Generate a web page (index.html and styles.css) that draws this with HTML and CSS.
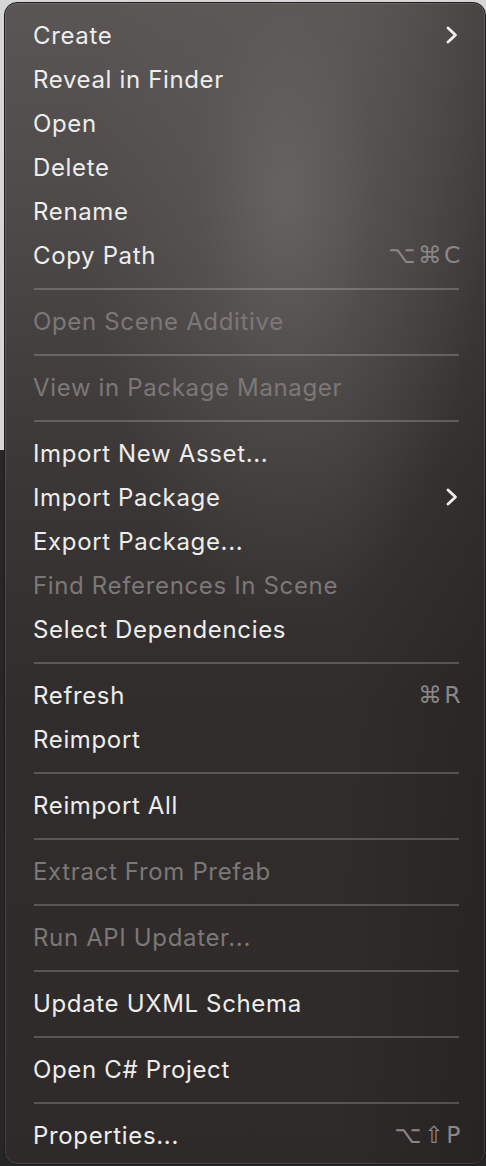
FILE: index.html
```html
<!DOCTYPE html>
<html>
<head>
<meta charset="utf-8">
<link rel="stylesheet" href="styles.css">
</head>
<body>
<div class="menu">
  <div class="item"><span class="label">Create</span><svg class="chev" viewBox="0 0 12 18"><path d="M2 2 L9.5 9 L2 16" fill="none" stroke="#f0f0f0" stroke-width="2.8" stroke-linecap="round" stroke-linejoin="round"/></svg></div>
  <div class="item"><span class="label">Reveal in Finder</span></div>
  <div class="item"><span class="label">Open</span></div>
  <div class="item"><span class="label">Delete</span></div>
  <div class="item"><span class="label">Rename</span></div>
  <div class="item"><span class="label">Copy Path</span><span class="key">⌥⌘C</span></div>
  <div class="sep"></div>
  <div class="item off"><span class="label">Open Scene Additive</span></div>
  <div class="sep"></div>
  <div class="item off"><span class="label">View in Package Manager</span></div>
  <div class="sep"></div>
  <div class="item"><span class="label">Import New Asset...</span></div>
  <div class="item"><span class="label">Import Package</span><svg class="chev" viewBox="0 0 12 18"><path d="M2 2 L9.5 9 L2 16" fill="none" stroke="#f0f0f0" stroke-width="2.8" stroke-linecap="round" stroke-linejoin="round"/></svg></div>
  <div class="item"><span class="label">Export Package...</span></div>
  <div class="item off"><span class="label">Find References In Scene</span></div>
  <div class="item"><span class="label">Select Dependencies</span></div>
  <div class="sep"></div>
  <div class="item"><span class="label">Refresh</span><span class="key">⌘R</span></div>
  <div class="item"><span class="label">Reimport</span></div>
  <div class="sep"></div>
  <div class="item"><span class="label">Reimport All</span></div>
  <div class="sep"></div>
  <div class="item off"><span class="label">Extract From Prefab</span></div>
  <div class="sep"></div>
  <div class="item off"><span class="label">Run API Updater...</span></div>
  <div class="sep"></div>
  <div class="item"><span class="label">Update UXML Schema</span></div>
  <div class="sep"></div>
  <div class="item"><span class="label">Open C# Project</span></div>
  <div class="sep"></div>
  <div class="item"><span class="label">Properties...</span><span class="key">⌥⇧P</span></div>
</div>
</body>
</html>
```
FILE: styles.css
```css
html, body {
  margin: 0;
  padding: 0;
}
body {
  width: 486px;
  height: 1166px;
  overflow: hidden;
  background: linear-gradient(to bottom, #d6d6d6 0, #d6d6d6 450px, #262626 450px, #262626 100%);
}
.menu {
  margin: 2px 0 0 4px;
  width: 482px;
  height: 1163px;
  box-sizing: border-box;
  padding: 11px 26px 8px 28px;
  border-radius: 13px;
  border: 1px solid #1c1a1a;
  box-shadow: inset 0 0 0 1px rgba(255,255,255,0.12);
  background:
    radial-gradient(ellipse 200px 430px at 280px 190px, rgba(108,104,102,0.8) 0%, rgba(95,91,89,0.45) 45%, rgba(80,76,74,0) 100%),
    linear-gradient(to right, rgba(0,0,0,0) 0%, rgba(0,0,0,0) 70%, rgba(20,16,15,0.25) 100%),
    linear-gradient(to bottom, #5a5655 0%, #4c4847 20%, #3b3736 40%, #312d2c 60%, #2e2a29 100%);
  font-family: Inter, "Noto Sans", sans-serif;
}
.item {
  height: 44px;
  box-sizing: border-box;
  padding-bottom: 2px;
  display: flex;
  align-items: center;
  justify-content: space-between;
  font-size: 24px;
  color: #ededec;
  letter-spacing: 0.65px;
}
.item.off {
  color: #7b7877;
}
.key {
  color: #8a8786;
  font-family: "DejaVu Sans", Inter, sans-serif;
  font-size: 23.5px;
  letter-spacing: 2.5px;
  margin-right: -4px;
}
.chev {
  width: 12px;
  height: 18px;
  margin-right: 1px;
}
.sep {
  height: 22px;
  display: flex;
  align-items: center;
}
.sep::before {
  content: "";
  display: block;
  width: 100%;
  height: 2px;
  margin-left: 1px;
  background: rgba(255,255,255,0.2);
}
```
